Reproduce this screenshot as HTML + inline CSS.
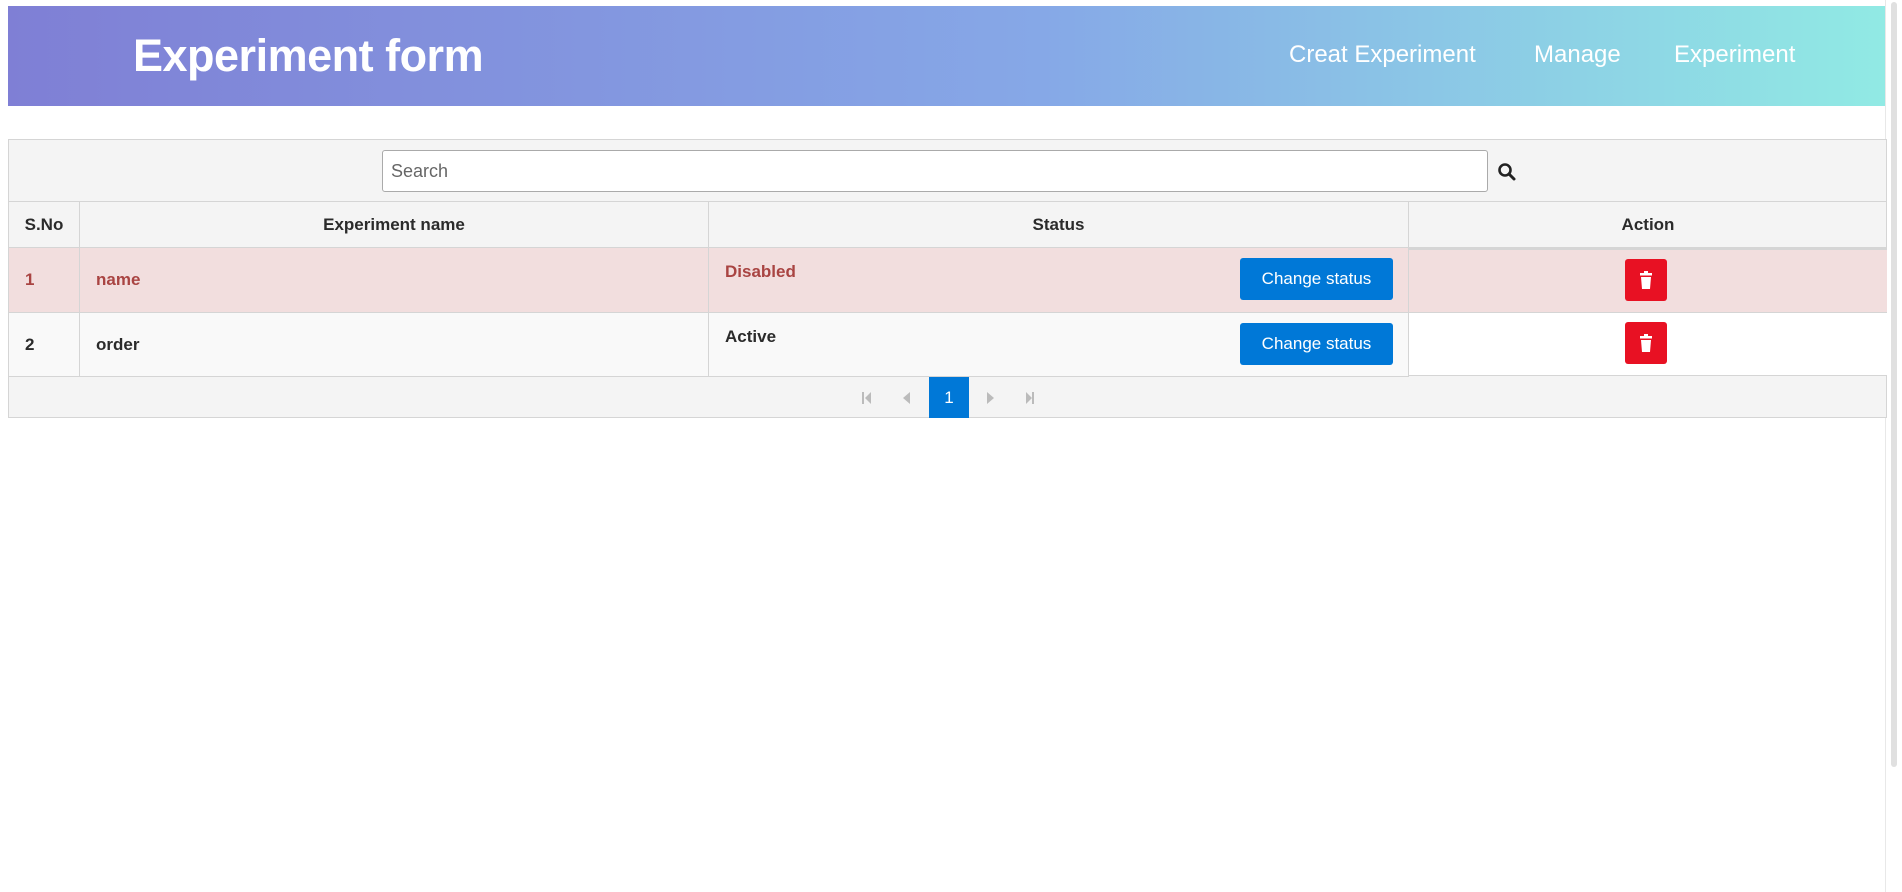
<!DOCTYPE html>
<html><head><style>
*{box-sizing:border-box}
body{margin:0;width:1902px;height:892px;overflow:hidden;background:#fff;font-family:"Liberation Sans",sans-serif;position:relative}
.hdr{position:absolute;left:8px;top:6px;width:1879px;height:100px;background:linear-gradient(90deg,#7f7fd5,#86a8e7 55%,#91eae4)}
.hdr h1{position:absolute;left:125px;top:24px;margin:0;color:#fff;font-size:45px;font-weight:bold;letter-spacing:-0.5px}
.nav{position:absolute;top:35px;color:#fff;font-size:24px}
.sb{position:absolute;right:0;top:0;width:17px;height:892px;background:#fff;border-left:1px solid #e8e8e8}
.sb div{position:absolute;left:5px;top:2px;width:6px;height:765px;background:#e0e0e0;border-radius:3px}
.tbl{position:absolute;left:8px;top:139px;width:1879px;height:279px;border:1px solid #d5d5d5;background:#f4f4f4}
.inp{position:absolute;left:373px;top:10px;width:1106px;height:42px;background:#fff;border:1px solid #aaa;border-radius:3px;font-size:18px;color:#666;padding:10px 8px;font-family:"Liberation Sans",sans-serif}
.cell{position:absolute;border-right:1px solid #d5d5d5;border-bottom:1px solid #d5d5d5;font-weight:bold;font-size:17px;color:#2b2b2b}
.th{text-align:center;line-height:45px}
.r1{background:#f2dede;color:#a94442}
.r2{background:#f9f9f9}
.btn{position:absolute;width:153px;height:42px;background:#0078d7;color:#fff;border-radius:3px;font-size:17px;font-weight:normal;text-align:center;line-height:42px}
.del{position:absolute;width:42px;height:42px;background:#e81123;border-radius:3px}
</style></head><body>
<div class="hdr"><h1>Experiment form</h1>
<div class="nav" style="left:1281px">Creat Experiment</div>
<div class="nav" style="left:1526px">Manage</div>
<div class="nav" style="left:1666px">Experiment</div>
</div>
<div class="sb"><div></div></div>
<div class="tbl">
<div class="inp">Search</div>
<svg style="position:absolute;left:1488px;top:22px" width="20" height="20" viewBox="0 0 20 20"><circle cx="8" cy="8" r="5.5" fill="none" stroke="#222" stroke-width="2.6"/><path d="M12 12l5 5" stroke="#222" stroke-width="3" stroke-linecap="round"/></svg>
<div class="cell th" style="left:0;top:61px;width:71px;height:47px;border-top:1px solid #d5d5d5">S.No</div>
<div class="cell th" style="left:71px;top:61px;width:629px;height:47px;border-top:1px solid #d5d5d5">Experiment name</div>
<div class="cell th" style="left:700px;top:61px;width:700px;height:47px;border-top:1px solid #d5d5d5">Status</div>
<div class="cell th" style="left:1400px;top:61px;width:478px;height:47px;border-top:1px solid #d5d5d5;border-right:none">Action</div>

<div class="cell r1" style="left:0;top:108px;width:71px;height:65px;padding:22px 0 0 16px">1</div>
<div class="cell r1" style="left:71px;top:108px;width:629px;height:65px;padding:22px 0 0 16px">name</div>
<div class="cell r1" style="left:700px;top:108px;width:700px;height:65px;padding:14px 0 0 16px">Disabled<div class="btn" style="left:531px;top:10px">Change status</div></div>
<div class="cell r1" style="left:1400px;top:108px;width:478px;height:65px;border-right:none;border-top:2px solid #d5d5d5"><div class="del" style="left:216px;top:9px"><svg width="42" height="42" viewBox="0 0 42 42"><rect x="15" y="14" width="12" height="2.5" fill="#fff"/><rect x="19" y="12" width="4" height="2" fill="#fff"/><path d="M16 18h10l-1 12h-8z" fill="#fff"/></svg></div></div>

<div class="cell r2" style="left:0;top:173px;width:71px;height:64px;padding:22px 0 0 16px">2</div>
<div class="cell r2" style="left:71px;top:173px;width:629px;height:64px;padding:22px 0 0 16px">order</div>
<div class="cell r2" style="left:700px;top:173px;width:700px;height:64px;padding:14px 0 0 16px">Active<div class="btn" style="left:531px;top:10px">Change status</div></div>
<div class="cell r2" style="left:1400px;top:173px;width:478px;height:63px;border-right:none;background:#fff"><div class="del" style="left:216px;top:9px"><svg width="42" height="42" viewBox="0 0 42 42"><rect x="15" y="14" width="12" height="2.5" fill="#fff"/><rect x="19" y="12" width="4" height="2" fill="#fff"/><path d="M16 18h10l-1 12h-8z" fill="#fff"/></svg></div></div>

<svg style="position:absolute;left:850px;top:250px" width="60" height="16" viewBox="0 0 60 16"><rect x="3" y="2" width="2" height="12" fill="#bbb"/><path d="M12 2v12l-6-6z" fill="#bbb"/><path d="M51 2v12l-7-6z" fill="#bbb"/></svg>
<div style="position:absolute;left:920px;top:237px;width:40px;height:41px;background:#0078d7;color:#fff;font-size:17px;text-align:center;line-height:41px">1</div>
<svg style="position:absolute;left:975px;top:250px" width="60" height="16" viewBox="0 0 60 16"><path d="M3 2v12l7-6z" fill="#bbb"/><path d="M42 2v12l6-6z" fill="#bbb"/><rect x="48" y="2" width="2" height="12" fill="#bbb"/></svg>
</div>
</body></html>
